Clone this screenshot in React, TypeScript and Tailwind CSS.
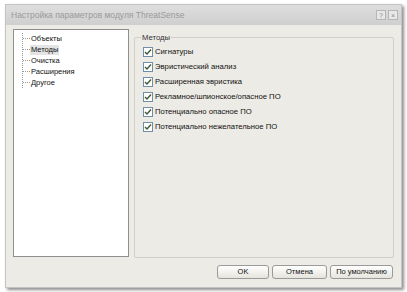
const items = ['Объекты', 'Методы', 'Очистка', 'Расширения', 'Другое'];
const checks = [
  'Сигнатуры',
  'Эвристический анализ',
  'Расширенная эвристика',
  'Рекламное/шпионское/опасное ПО',
  'Потенциально опасное ПО',
  'Потенциально нежелательное ПО',
];

function CheckBox() {
  return (
    <span className="w-[10px] h-[10px] border border-[#6f8fa8] bg-white flex items-center justify-center shrink-0">
      <svg width="8" height="8" viewBox="0 0 8 8">
        <path d="M1 4 L3 6 L7 1.5" fill="none" stroke="#3b5a3b" strokeWidth="1.4" />
      </svg>
    </span>
  );
}

function Btn({ label, w }: { label: string; w: string }) {
  return (
    <button className={`${w} h-[14px] rounded-[3px] border border-[#9a9a9a] bg-gradient-to-b from-white to-[#e6e4dd] text-[7.5px] leading-none text-[#111]`}>
      {label}
    </button>
  );
}

export default function App() {
  return (
    <div className="w-[407px] h-[292px] bg-white pl-[5px] pt-[4px]" style={{ fontFamily: '"Liberation Sans", Arial, sans-serif' }}>
      <div className="w-[397px] h-[284px] border border-[#c4c4c4] bg-[#edebe5] shadow-[2px_2px_3px_rgba(0,0,0,0.45)] flex flex-col">
        <div className="h-[20px] bg-gradient-to-b from-[#dedede] to-[#cfcfcf] flex items-center pl-[5px] pr-[3px]">
          <span className="text-[8.5px] text-[#9a9a9a] flex-1">Настройка параметров модуля ThreatSense</span>
          <div className="flex gap-[2px]">
            <span className="w-[10px] h-[10px] border border-[#b5b5b5] bg-[#e8e8e8] text-[7px] leading-[9px] text-center text-[#888]">?</span>
            <span className="w-[10px] h-[10px] border border-[#b5b5b5] bg-[#e8e8e8] text-[7px] leading-[9px] text-center text-[#888]">×</span>
          </div>
        </div>
        <div className="flex-1 flex flex-col px-[7px] pt-[4px] pb-[8px]">
          <div className="flex gap-[5px]">
            <div className="w-[116px] h-[228px] border border-[#8f8f8f] bg-white pt-[3px] pl-[8px]">
              <div className="relative border-l border-dotted border-[#9a9a9a]">
                {items.map((t, i) => (
                  <div key={t} className="flex items-center h-[11px]">
                    <span className="w-[7px] border-t border-dotted border-[#9a9a9a]" />
                    <span className={`text-[7.5px] leading-[10px] text-[#111] px-[1px] ${i === 1 ? 'bg-[#e4e4e4]' : ''}`}>{t}</span>
                  </div>
                ))}
              </div>
            </div>
            <div className="w-[260px] h-[221px] border border-[#d0d0c8] rounded-[2px] mt-[8px] relative pt-[9px] pl-[8px]">
              <span className="absolute -top-[6px] left-[6px] bg-[#edebe5] px-[1px] text-[7.7px] leading-[11px] text-[#333]">Методы</span>
              <div className="flex flex-col gap-[5px]">
                {checks.map((c) => (
                  <div key={c} className="flex items-center gap-[2px] h-[10px]">
                    <CheckBox />
                    <span className="text-[7.7px] text-[#111] leading-none">{c}</span>
                  </div>
                ))}
              </div>
            </div>
          </div>
          <div className="flex justify-end gap-[3px] mt-[7px] pr-[1px]">
            <Btn label="OK" w="w-[52px]" />
            <Btn label="Отмена" w="w-[55px]" />
            <Btn label="По умолчанию" w="w-[63px]" />
          </div>
        </div>
      </div>
    </div>
  );
}
